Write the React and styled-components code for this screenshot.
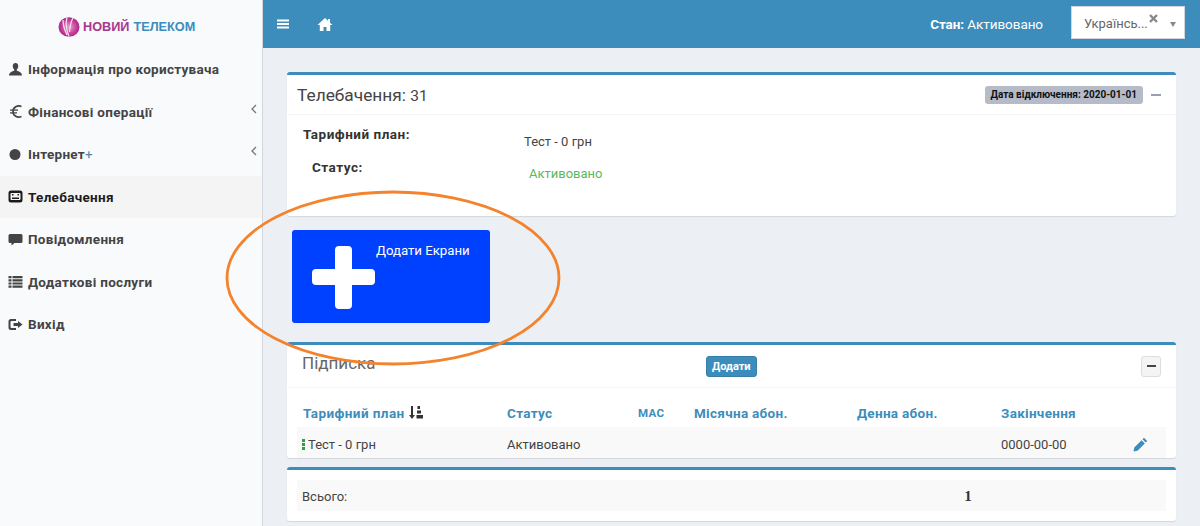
import React from 'react'
import styled, { createGlobalStyle } from 'styled-components'

const GlobalStyle = createGlobalStyle`
  html, body { margin: 0; padding: 0; height: 526px; overflow: hidden; }
  body { font-family: Roboto, "Liberation Sans", sans-serif; background: #ecf0f5; color: #333; }
  * { box-sizing: border-box; }
`

const Page = styled.div`
  position: relative;
  display: flex;
  width: 1200px;
  height: 526px;
  overflow: hidden;
`

const Sidebar = styled.aside`
  width: 263px;
  flex: none;
  background: #f9fafc;
  border-right: 1px solid #d2d6de;
`

const Logo = styled.div`
  height: 48px;
  padding: 5px 0 0 58px;
  display: flex;
  align-items: center;
  gap: 3px;
`

const LogoText = styled.span`
  font-family: "Liberation Sans", Arial, sans-serif;
  font-size: 12.7px;
  font-weight: 700;
  white-space: nowrap;
  color: ${({ $color }) => $color};
  margin-right: ${({ $gap }) => $gap || 0}px;
`

const Menu = styled.nav`
  display: flex;
  flex-direction: column;
`

const MenuItem = styled.a`
  position: relative;
  height: 42.5px;
  padding-left: 8px;
  display: flex;
  align-items: center;
  gap: 5px;
  font-size: 13.5px;
  font-weight: 700;
  letter-spacing: 0.3px;
  color: ${({ $active }) => ($active ? '#1c1c1c' : '#444')};
  background: ${({ $active }) => ($active ? '#f4f4f5' : 'transparent')};
`

const MenuIcon = styled.svg`
  width: 15px;
  height: 15px;
  flex: none;
  fill: currentColor;
`

const Plus = styled.span`
  font-weight: 400;
  color: #5a86a3;
`

const Chevron = styled.svg`
  position: absolute;
  right: 5px;
  top: 13px;
  width: 6px;
  height: 10px;
  fill: none;
  stroke: #777;
  stroke-width: 1.3;
`

const Main = styled.div`
  flex: 1;
  min-width: 0;
  display: flex;
  flex-direction: column;
`

const Navbar = styled.header`
  height: 48px;
  flex: none;
  background: #3c8dbc;
  display: flex;
  align-items: center;
  padding: 0 15px 0 14px;
  color: #fff;
`

const NavIcon = styled.svg`
  fill: #fff;
  margin-right: ${({ $gap }) => $gap || 0}px;
  flex: none;
`

const Status = styled.div`
  margin-left: auto;
  margin-right: 28px;
  font-size: 13.5px;
  letter-spacing: -0.07px;
  b { font-weight: 700; }
`

const LangSelect = styled.div`
  position: relative;
  width: 114px;
  height: 33px;
  margin-top: -4px;
  background: #fff;
  border: 1px solid #d2d6de;
  color: #666;
  font-size: 13px;
  padding: 9px 0 0 12px;
`

const LangClear = styled.svg`
  position: absolute;
  left: 77px;
  top: 7px;
  width: 9px;
  height: 9px;
  stroke: #888;
  stroke-width: 2.4;
`

const LangCaret = styled.span`
  position: absolute;
  right: 8px;
  top: 15px;
  border-left: 3.5px solid transparent;
  border-right: 3.5px solid transparent;
  border-top: 5px solid #888;
`

const Content = styled.main`
  padding: 24px 24px 0 24px;
  display: flex;
  flex-direction: column;
`

const Box = styled.section`
  background: #fff;
  border-top: 3px solid #3c8dbc;
  border-radius: 3px;
  box-shadow: 0 1px 1px rgba(0, 0, 0, 0.1);
  margin-bottom: ${({ $mb }) => $mb || 0}px;
`

const BoxHeader = styled.div`
  height: ${({ $h }) => $h}px;
  display: flex;
  align-items: center;
  border-bottom: 1px solid #f4f4f4;
  padding: 0 10px;
`

const TvTitle = styled.h3`
  margin: 0;
  font-size: 17.3px;
  font-weight: 400;
  color: #444;
`

const Num = styled.span`
  font-size: 15.5px;
`

const DateBadge = styled.span`
  margin-left: auto;
  background: #b5bbc8;
  border-radius: 3px;
  color: #111;
  font-size: 10px;
  font-weight: 700;
  padding: 3px 6px;
  line-height: 12px;
`

const Minus = styled.span`
  width: 10px;
  height: 2px;
  background: #97a0b3;
  margin: 0 5px 0 8px;
`

const BoxBody = styled.div`
  height: 101px;
  position: relative;
  display: grid;
  grid-template-columns: 221px 1fr;
  grid-template-rows: 33px 32px;
  padding: 11px 0 0 16px;
  font-size: 13.5px;
`

const FieldLabel = styled.strong`
  font-size: 13.5px;
  font-weight: 700;
  letter-spacing: 0.5px;
  color: #333;
  padding-left: ${({ $indent }) => $indent || 0}px;
`

const FieldValue = styled.span`
  font-size: 13px;
  padding-top: ${({ $top }) => $top}px;
  padding-left: ${({ $indent }) => $indent || 0}px;
  color: ${({ $color }) => $color || '#444'};
`

const ActionArea = styled.div`
  height: 126px;
  padding: 14px 0 0 5px;
`

const AddTile = styled.a`
  width: 198px;
  height: 93px;
  background: #0040ff;
  border-radius: 3px;
  display: flex;
  position: relative;
  color: #fff;
  font-size: 13.2px;
  padding: 13px 0 0 84px;
`

const PlusGlyph = styled.svg`
  position: absolute;
  left: 20px;
  top: 16px;
  width: 63px;
  height: 63px;
  fill: #fff;
`

const SubTitle = styled.h3`
  margin: -7px 0 0 5px;
  width: 404px;
  flex: none;
  font-size: 17px;
  font-weight: 400;
  color: #666;
`

const AddButton = styled.button`
  height: 21px;
  padding: 0 5px;
  border: 1px solid #367fa9;
  border-radius: 3px;
  background: #3c8dbc;
  color: #fff;
  font: 700 11px Roboto, sans-serif;
`

const CollapseButton = styled.button`
  margin-left: auto;
  width: 20px;
  height: 21px;
  margin-right: 5px;
  background: #f4f4f4;
  border: 1px solid #ddd;
  border-radius: 3px;
  display: flex;
  align-items: center;
  justify-content: center;
  padding: 0;
  span { width: 9px; height: 2px; background: #444; }
`

const Table = styled.div`
  margin: 0 10px;
  font-size: 13px;
`

const Row = styled.div`
  display: grid;
  grid-template-columns: 205px 131px 56px 163px 144px 132px 1fr;
  align-items: center;
  height: ${({ $h }) => $h}px;
  padding-left: 5px;
  padding-top: ${({ $top }) => $top}px;
  background: ${({ $shade }) => ($shade ? '#f9f9f9' : 'transparent')};
`

const HeadCell = styled.span`
  display: flex;
  align-items: center;
  gap: 4px;
  font-weight: 700;
  font-size: ${({ $small }) => ($small ? '11.5px' : '13.5px')};
  letter-spacing: ${({ $wide }) => ($wide ? '0.42px' : '0.3px')};
  padding-left: ${({ $wide }) => ($wide ? '1px' : '0')};
  color: #3c8dbc;
  white-space: nowrap;
`

const Cell = styled.span`
  display: flex;
  align-items: center;
  gap: 3px;
  color: #444;
  font-size: 13px;
`

const Dots = styled.i`
  width: 3px;
  height: 11px;
  flex: none;
  background: repeating-linear-gradient(#27a048 0 3px, transparent 3px 4px);
`

const TotalRow = styled.div`
  margin: 10px 10px 10px;
  height: 31px;
  background: #f9f9f9;
  display: flex;
  align-items: center;
  padding: 2px 0 0 5px;
  font-size: 13px;
  color: #444;
`

const TotalValue = styled.b`
  margin-left: 617px;
  font-family: "Liberation Serif", serif;
  font-size: 15px;
  color: #333;
`

const Ellipse = styled.svg`
  position: absolute;
  left: 224px;
  top: 190px;
  width: 338px;
  height: 176px;
  fill: none;
  stroke: #f5822c;
  stroke-width: 2.8;
  pointer-events: none;
`

const icons = {
  user: <path d="M7.500 1C5.600 1 4.600 2.500 4.800 4.400c.1 1.400.8 2.500 1.400 3.200v1.200C4 9.600 1.200 10.300 1 13.500h13c-.2-3.200-3-3.900-5.200-4.700V7.600c.6-.7 1.300-1.800 1.400-3.200C10.400 2.500 9.400 1 7.500 1z" />,
  euro: (
    <g fill="none" stroke="currentColor" strokeWidth="1.700">
      <path d="M13.500 2.500C9.500.8 5 3 5 7.500s4.500 6.700 8.500 5" />
      <path d="M2 6.200h8M2 8.800h7" strokeWidth="1.300" />
    </g>
  ),
  record: <circle cx="7" cy="7.500" r="5.500" />,
  tv: (
    <path
      fillRule="evenodd"
      d="M3 1.500h9A2.500 2.500 0 0 1 14.500 4v7a2.500 2.500 0 0 1-2.500 2.500H3A2.500 2.500 0 0 1 .5 11V4A2.500 2.500 0 0 1 3 1.500zM3.500 4A1 1 0 0 0 2.500 5v5a1 1 0 0 0 1 1h8a1 1 0 0 0 1-1V5a1 1 0 0 0-1-1zM4 5h1.500v1.500H4zM9.500 5H11v1.500H9.500zM4 8.500h7V10H4z"
    />
  ),
  comment: <path d="M2 2h11a1.500 1.500 0 0 1 1.500 1.500v6A1.500 1.500 0 0 1 13 11H6.500L3.500 13.500V11H2A1.500 1.500 0 0 1 .5 9.500v-6A1.500 1.500 0 0 1 2 2z" />,
  list: <path d="M.5 2h3v2.200h-3zM4.500 2h10v2.200h-10zM.5 5.200h3v2.200h-3zM4.500 5.200h10v2.200h-10zM.5 8.400h3v2.200h-3zM4.500 8.400h10v2.200h-10zM.5 11.600h3v2.200h-3zM4.500 11.600h10v2.200h-10z" />,
  logout: <path d="M3 2h5v2H3.500a1 1 0 0 0-1 1v5a1 1 0 0 0 1 1H8v2H3a2.500 2.500 0 0 1-2.500-2.500v-6A2.500 2.500 0 0 1 3 2zm7 2l4.500 3.500L10 11V9H5.500V6H10z" />,
}

const menu = [
  { icon: 'user', label: 'Інформація про користувача' },
  { icon: 'euro', label: 'Фінансові операції', arrow: true },
  { icon: 'record', label: <>Інтернет<Plus>+</Plus></>, arrow: true },
  { icon: 'tv', label: 'Телебачення', active: true },
  { icon: 'comment', label: 'Повідомлення' },
  { icon: 'list', label: 'Додаткові послуги' },
  { icon: 'logout', label: 'Вихід' },
]

const App = () => (
  <Page>
    <GlobalStyle />
    <Sidebar>
      <Logo>
        <svg width="22" height="20" viewBox="0 0 22 20">
          <defs>
            <radialGradient id="lg" cx="0.5" cy="0.5" r="0.6">
              <stop offset="0" stopColor="#e9a3cf" />
              <stop offset="0.6" stopColor="#c63c9a" />
              <stop offset="1" stopColor="#8c1f7d" />
            </radialGradient>
          </defs>
          <ellipse cx="11" cy="10" rx="10.500" ry="9.800" fill="url(#lg)" />
          <path d="M9 .5c-1.500 5-.5 13 2 19M15 1c-2.500 4-3 9-3.500 14M5 3c0 5 1.500 10 4 15" stroke="#f8e6f1" strokeWidth="1.200" fill="none" />
        </svg>
        <LogoText $color="#a5388f" $gap={1}>НОВИЙ</LogoText>
        <LogoText $color="#3c8dbc">ТЕЛЕКОМ</LogoText>
      </Logo>
      <Menu>
        {menu.map((item) => (
          <MenuItem key={item.icon} $active={item.active}>
            <MenuIcon viewBox="0 0 15 15">{icons[item.icon]}</MenuIcon>
            <span>{item.label}</span>
            {item.arrow && (
              <Chevron viewBox="0 0 6 10">
                <path d="M5 1L1 5l4 4" />
              </Chevron>
            )}
          </MenuItem>
        ))}
      </Menu>
    </Sidebar>

    <Main>
      <Navbar>
        <NavIcon $gap={28} width="12" height="12" viewBox="0 0 12 12">
          <path d="M0 1.500h12v2H0zM0 5h12v2H0zM0 8.500h12v2H0z" />
        </NavIcon>
        <NavIcon width="16" height="15" viewBox="0 0 16 15">
          <path d="M8 1L0.500 8h2.300v6h3.700v-4h3v4h3.700V8h2.300L13 5.700V2h-2v1.800z" />
        </NavIcon>
        <Status>
          <b>Стан:</b> Активовано
        </Status>
        <LangSelect>
          Українсь...
          <LangClear viewBox="0 0 9 9">
            <path d="M1 1l7 7M8 1L1 8" />
          </LangClear>
          <LangCaret />
        </LangSelect>
      </Navbar>

      <Content>
        <Box>
          <BoxHeader $h={40}>
            <TvTitle>
              Телебачення: <Num>31</Num>
            </TvTitle>
            <DateBadge>Дата відключення: 2020-01-01</DateBadge>
            <Minus />
          </BoxHeader>
          <BoxBody>
            <FieldLabel>Тарифний план:</FieldLabel>
            <FieldValue $top={8}>Тест - 0 грн</FieldValue>
            <FieldLabel $indent={9}>Статус:</FieldLabel>
            <FieldValue $top={7} $indent={5} $color="#5cb85c">Активовано</FieldValue>
          </BoxBody>
        </Box>

        <ActionArea>
          <AddTile>
            <PlusGlyph viewBox="0 0 63 63">
              <path d="M27 0h9a4 4 0 0 1 4 4v19h19a4 4 0 0 1 4 4v8a4 4 0 0 1-4 4H40v20a4 4 0 0 1-4 4h-9a4 4 0 0 1-4-4V39H4a4 4 0 0 1-4-4v-8a4 4 0 0 1 4-4h19V4a4 4 0 0 1 4-4z" />
            </PlusGlyph>
            Додати Екрани
          </AddTile>
        </ActionArea>

        <Box $mb={9}>
          <BoxHeader $h={43}>
            <SubTitle>Підписка</SubTitle>
            <AddButton>Додати</AddButton>
            <CollapseButton><span /></CollapseButton>
          </BoxHeader>
          <Table>
            <Row $h={39} $top={11}>
              <HeadCell $wide>
                Тарифний план
                <svg width="14" height="14" viewBox="0 0 14 14" fill="#333">
                  <path d="M2 0h2v9h2l-3 4-3-4h2zM8.500 0h2.500v3H8.500zM8 4.500h4v3H8zM7.500 9H14v3.500H7.500z" />
                </svg>
              </HeadCell>
              <HeadCell>Статус</HeadCell>
              <HeadCell $small>MAC</HeadCell>
              <HeadCell>Місячна абон.</HeadCell>
              <HeadCell>Денна абон.</HeadCell>
              <HeadCell>Закінчення</HeadCell>
              <span />
            </Row>
            <Row $h={31} $top={3} $shade>
              <Cell><Dots />Тест - 0 грн</Cell>
              <Cell>Активовано</Cell>
              <span />
              <span />
              <span />
              <Cell>0000-00-00</Cell>
              <svg width="15" height="15" viewBox="0 0 15 15" fill="#3c8dbc">
                <path d="M11 .8l3.200 3.200-1.500 1.500L9.500 2.300zM8.600 3.200l3.200 3.200-7.300 7.300L.5 14.500l.8-4z" />
              </svg>
            </Row>
          </Table>
        </Box>

        <Box>
          <TotalRow>
            Всього:
            <TotalValue>1</TotalValue>
          </TotalRow>
        </Box>
      </Content>
    </Main>

    <Ellipse viewBox="0 0 338 176">
      <ellipse cx="169" cy="88" rx="166" ry="86" />
    </Ellipse>
  </Page>
)

export default App
